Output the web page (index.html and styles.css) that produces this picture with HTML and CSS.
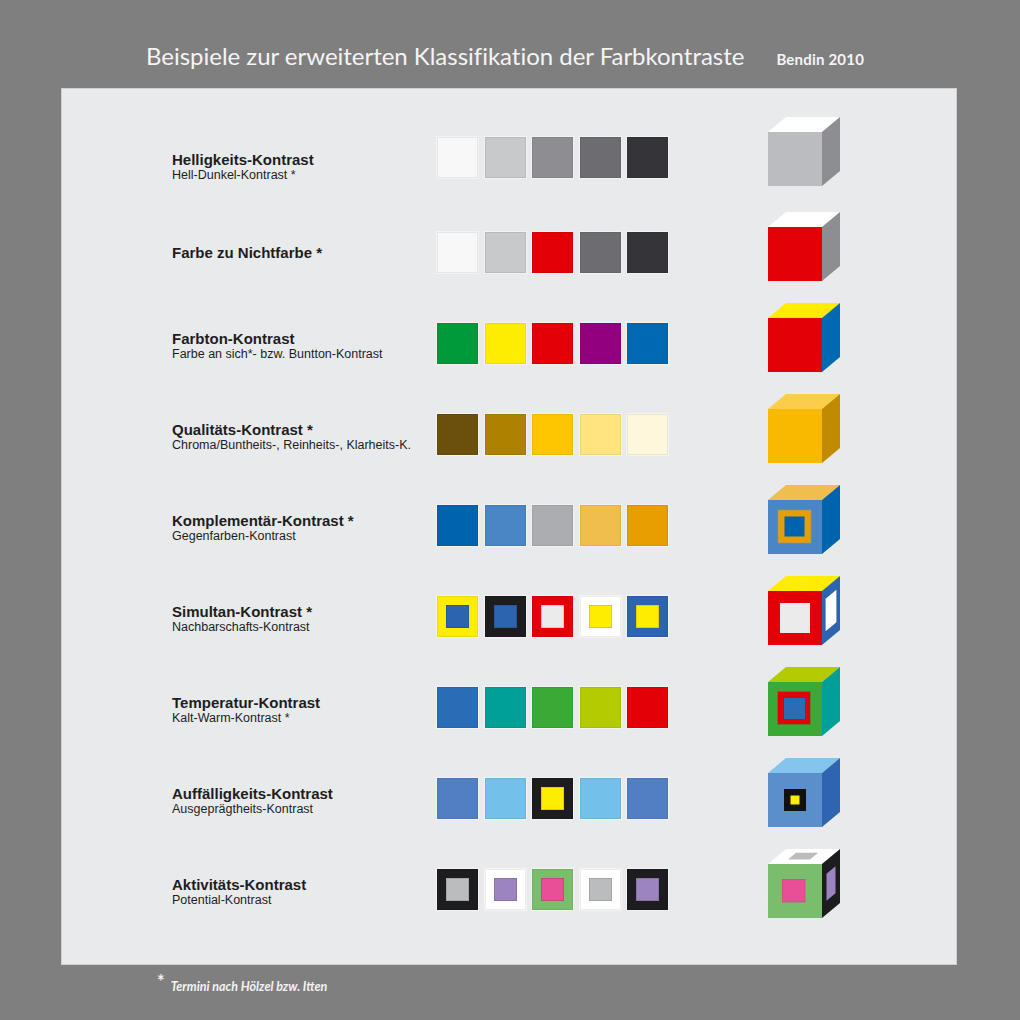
FILE: index.html
```html
<!DOCTYPE html>
<html lang="de">
<head>
<meta charset="utf-8">
<title>Farbkontraste</title>
<link rel="stylesheet" href="styles.css">
</head>
<body>
<header class="head">
  <h1 class="title">Beispiele zur erweiterten Klassifikation der Farbkontraste</h1>
  <span class="author">Bendin 2010</span>
</header>
<main class="panel">
  <section class="row first">
    <div class="label"><div class="t">Helligkeits-Kontrast</div><div class="s">Hell-Dunkel-Kontrast *</div></div>
    <div class="swatches">
      <div class="sw c-w0"></div><div class="sw c-g1"></div><div class="sw c-g2"></div><div class="sw c-g3"></div><div class="sw c-g4"></div>
    </div>
    <svg class="cube" viewBox="0 0 72 69" width="72" height="69">
      <polygon points="0,15 18,0 72,0 54,15" fill="#ffffff"/>
      <polygon points="54,15 72,0 72,54 54,69" fill="#8e8e92"/>
      <rect x="0" y="15" width="54" height="54" fill="#bbbcbf"/>
    </svg>
  </section>
  <section class="row single">
    <div class="label"><div class="t">Farbe zu Nichtfarbe *</div></div>
    <div class="swatches">
      <div class="sw c-w0"></div><div class="sw c-g1"></div><div class="sw c-red"></div><div class="sw c-g3"></div><div class="sw c-g4"></div>
    </div>
    <svg class="cube" viewBox="0 0 72 69" width="72" height="69">
      <polygon points="0,15 18,0 72,0 54,15" fill="#ffffff"/>
      <polygon points="54,15 72,0 72,54 54,69" fill="#8e8e92"/>
      <rect x="0" y="15" width="54" height="54" fill="#e30007"/>
    </svg>
  </section>
  <section class="row">
    <div class="label"><div class="t">Farbton-Kontrast</div><div class="s">Farbe an sich*- bzw. Buntton-Kontrast</div></div>
    <div class="swatches">
      <div class="sw c-green"></div><div class="sw c-yellow"></div><div class="sw c-red"></div><div class="sw c-purple"></div><div class="sw c-blue"></div>
    </div>
    <svg class="cube" viewBox="0 0 72 69" width="72" height="69">
      <polygon points="0,15 18,0 72,0 54,15" fill="#ffed00"/>
      <polygon points="54,15 72,0 72,54 54,69" fill="#0069b4"/>
      <rect x="0" y="15" width="54" height="54" fill="#e30007"/>
    </svg>
  </section>
  <section class="row">
    <div class="label"><div class="t">Qualitäts-Kontrast *</div><div class="s">Chroma/Buntheits-, Reinheits-, Klarheits-K.</div></div>
    <div class="swatches">
      <div class="sw c-brown"></div><div class="sw c-ochre"></div><div class="sw c-gold"></div><div class="sw c-ylight"></div><div class="sw c-cream"></div>
    </div>
    <svg class="cube" viewBox="0 0 72 69" width="72" height="69">
      <polygon points="0,15 18,0 72,0 54,15" fill="#fccd4a"/>
      <polygon points="54,15 72,0 72,54 54,69" fill="#c08b00"/>
      <rect x="0" y="15" width="54" height="54" fill="#f9b900"/>
    </svg>
  </section>
  <section class="row">
    <div class="label"><div class="t">Komplementär-Kontrast *</div><div class="s">Gegenfarben-Kontrast</div></div>
    <div class="swatches">
      <div class="sw c-blue2"></div><div class="sw c-blue3"></div><div class="sw c-gray"></div><div class="sw c-orl"></div><div class="sw c-or"></div>
    </div>
    <svg class="cube" viewBox="0 0 72 69" width="72" height="69">
      <polygon points="0,15 18,0 72,0 54,15" fill="#f0be4c"/>
      <polygon points="54,15 72,0 72,54 54,69" fill="#0063ae"/>
      <rect x="0" y="15" width="54" height="54" fill="#4a85c6"/>
      <rect x="10" y="25" width="33" height="33" fill="#e89d00" stroke="#6f9bd0" stroke-width="0.6"/>
      <rect x="16.5" y="31.5" width="20" height="20" fill="#0063ae"/>
    </svg>
  </section>
  <section class="row">
    <div class="label"><div class="t">Simultan-Kontrast *</div><div class="s">Nachbarschafts-Kontrast</div></div>
    <div class="swatches">
      <div class="sw c-yellow"><span class="in c-blue4"></span></div>
      <div class="sw c-black"><span class="in c-blue4"></span></div>
      <div class="sw c-red"><span class="in c-pale"></span></div>
      <div class="sw c-white"><span class="in c-yellow"></span></div>
      <div class="sw c-blue4"><span class="in c-yellow"></span></div>
    </div>
    <svg class="cube" viewBox="0 0 72 69" width="72" height="69">
      <polygon points="0,15 18,0 72,0 54,15" fill="#ffed00"/>
      <polygon points="15,11.5 29.5,11.5 40,3.5 25.5,3.5" fill="none" stroke="#f7e84a" stroke-width="1"/>
      <polygon points="54,15 72,0 72,54 54,69" fill="#2d64b0"/>
      <polygon points="57.6,22.8 68.4,13.8 68.4,46.2 57.6,55.2" fill="#ffffff"/>
      <rect x="0" y="15" width="54" height="54" fill="#e30007"/>
      <rect x="12" y="27" width="30" height="30" fill="#ebebeb"/>
    </svg>
  </section>
  <section class="row">
    <div class="label"><div class="t">Temperatur-Kontrast</div><div class="s">Kalt-Warm-Kontrast *</div></div>
    <div class="swatches">
      <div class="sw c-sblue"></div><div class="sw c-teal"></div><div class="sw c-green2"></div><div class="sw c-lime"></div><div class="sw c-red"></div>
    </div>
    <svg class="cube" viewBox="0 0 72 69" width="72" height="69">
      <polygon points="0,15 18,0 72,0 54,15" fill="#b3cb00"/>
      <polygon points="54,15 72,0 72,54 54,69" fill="#00a096"/>
      <rect x="0" y="15" width="54" height="54" fill="#3aa935"/>
      <rect x="9.5" y="24.5" width="33" height="33" fill="#e30007" stroke="#2f9a3a" stroke-width="0.6"/>
      <rect x="16" y="31" width="21" height="21" fill="#2a6db6"/>
    </svg>
  </section>
  <section class="row">
    <div class="label"><div class="t">Auffälligkeits-Kontrast</div><div class="s">Ausgeprägtheits-Kontrast</div></div>
    <div class="swatches">
      <div class="sw c-mblue"></div><div class="sw c-sky"></div>
      <div class="sw c-black"><span class="in c-yellow"></span></div>
      <div class="sw c-sky"></div><div class="sw c-mblue"></div>
    </div>
    <svg class="cube" viewBox="0 0 72 69" width="72" height="69">
      <polygon points="0,15 18,0 72,0 54,15" fill="#85c4ec"/>
      <polygon points="54,15 72,0 72,54 54,69" fill="#2f65b0"/>
      <rect x="0" y="15" width="54" height="54" fill="#5b8fcc"/>
      <rect x="16" y="31" width="22" height="22" fill="#111113"/>
      <rect x="22.5" y="37.5" width="9" height="9" fill="#ffed00"/>
    </svg>
  </section>
  <section class="row">
    <div class="label"><div class="t">Aktivitäts-Kontrast</div><div class="s">Potential-Kontrast</div></div>
    <div class="swatches">
      <div class="sw c-black"><span class="in c-silver"></span></div>
      <div class="sw c-white"><span class="in c-lav"></span></div>
      <div class="sw c-lgreen"><span class="in c-pink"></span></div>
      <div class="sw c-white"><span class="in c-silver"></span></div>
      <div class="sw c-black"><span class="in c-lav"></span></div>
    </div>
    <svg class="cube" viewBox="0 0 72 69" width="72" height="69">
      <polygon points="0,15 18,0 72,0 54,15" fill="#ffffff"/>
      <polygon points="20,10.5 42,10.5 50.2,3.75 28.1,3.75" fill="#bbbcbe"/>
      <polygon points="54,15 72,0 72,54 54,69" fill="#1d1d1f"/>
      <polygon points="58.5,24.75 67.5,17.25 67.5,44.25 58.5,51.75" fill="#9c84c0"/>
      <rect x="0" y="15" width="54" height="54" fill="#7abd6c"/>
      <rect x="14.5" y="30.5" width="22.5" height="22.5" fill="#e84f97" stroke="#d03c84" stroke-width="0.6"/>
    </svg>
  </section>
</main>
<footer class="foot">
  <span class="star">*</span><span class="note">Termini nach Hölzel bzw. Itten</span>
</footer>
</body>
</html>
```

FILE: styles.css
```css
* { box-sizing: border-box; }

html, body {
  margin: 0;
  padding: 0;
}

body {
  background: #7f7f7f;
  width: 1020px;
  height: 1020px;
  overflow: hidden;
  font-family: "Liberation Sans", Arial, sans-serif;
}

.head {
  height: 88px;
  display: flex;
  align-items: baseline;
  gap: 32px;
  padding-left: 146px;
  padding-top: 42px;
  color: #f4f4f4;
  font-family: Lato, "Open Sans", sans-serif;
}

.title {
  margin: 0;
  font-size: 24px;
  line-height: 28px;
  font-weight: 400;
  letter-spacing: -0.02px;
}

.author {
  font-size: 15px;
  font-weight: 700;
  letter-spacing: 0.2px;
}

.panel {
  margin-left: 61px;
  width: 896px;
  height: 877px;
  background: #e9eaeb;
  border: 1px solid #cfcfcf;
  padding-top: 28px;
  padding-left: 110px;
}

.row {
  display: grid;
  grid-template-columns: 265px 331px 72px;
  align-items: start;
  height: 91px;
}

.row.first {
  height: 95px;
}

.label {
  padding-top: 27px;
  color: #1e1e1e;
}

.row.first .label {
  padding-top: 34px;
}

.row.single .label {
  padding-top: 32px;
}

.t {
  font-size: 15px;
  line-height: 17px;
  font-weight: 700;
}

.s {
  font-size: 12.5px;
  line-height: 14px;
}

.swatches {
  margin-top: 20px;
  display: flex;
  gap: 6.5px;
}

.sw {
  width: 41px;
  height: 41px;
  display: grid;
  place-items: center;
  box-shadow: inset 0 0 0 1px rgba(0, 0, 0, 0.07), 0 0 0 1px rgba(255, 255, 255, 0.45);
}

.in {
  width: 23px;
  height: 23px;
  box-shadow: inset 0 0 0 1px rgba(0, 0, 0, 0.12);
}

.cube {
  display: block;
}

.c-w0 { background: #f8f8f8; }
.c-g1 { background: #c8c9cb; }
.c-g2 { background: #8e8e92; }
.c-g3 { background: #6d6c70; }
.c-g4 { background: #353438; }
.c-red { background: #e30007; }
.c-green { background: #009a3a; }
.c-yellow { background: #ffed00; }
.c-purple { background: #93007f; }
.c-blue { background: #0069b4; }
.c-brown { background: #6b4f0c; }
.c-ochre { background: #ae8200; }
.c-gold { background: #fdc600; }
.c-ylight { background: #ffe480; }
.c-cream { background: #fff7dc; }
.c-blue2 { background: #0063ae; }
.c-blue3 { background: #4a85c6; }
.c-gray { background: #acadb0; }
.c-orl { background: #f0be4c; }
.c-or { background: #e89d00; }
.c-blue4 { background: #2d64b0; }
.c-black { background: #1d1d1f; }
.c-white { background: #ffffff; }
.c-pale { background: #ebebeb; }
.c-sblue { background: #2a6db6; }
.c-teal { background: #00a096; }
.c-green2 { background: #3aa935; }
.c-lime { background: #b3cb00; }
.c-mblue { background: #527fc4; }
.c-sky { background: #73c0ea; }
.c-lgreen { background: #7abd6c; }
.c-pink { background: #e84f97; }
.c-lav { background: #9c84c0; }
.c-silver { background: #bbbcbe; }

.foot {
  display: flex;
  align-items: baseline;
  gap: 6px;
  padding-left: 157px;
  padding-top: 8px;
  color: #f2f2f2;
  font-family: Lato, "Open Sans", sans-serif;
  font-weight: 700;
}

.star {
  font-size: 18px;
  position: relative;
  top: -3px;
}

.note {
  font-size: 12.5px;
  font-style: italic;
}
```
